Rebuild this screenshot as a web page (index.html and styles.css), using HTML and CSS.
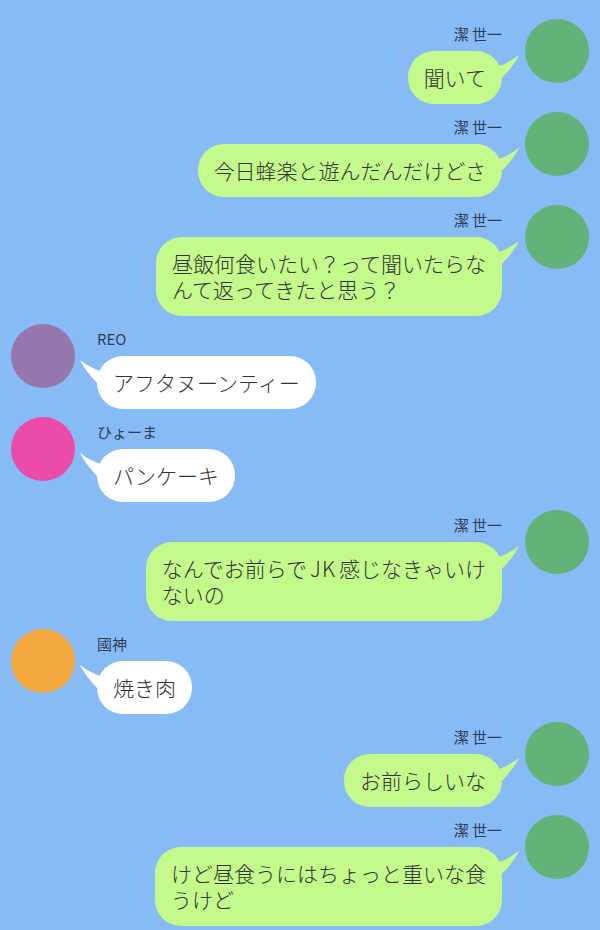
FILE: index.html
```html
<!DOCTYPE html>
<html lang="ja">
<head>
    <meta charset="UTF-8">
    <meta name="viewport" content="width=device-width, initial-scale=1.0">
    <title>トーク</title>
    <link rel="stylesheet" href="styles.css">
</head>
<body>
    <div class="chat">
        <!-- 自分側 -->
        <div class="row me">
            <div class="msg">
                <div class="name">潔 世一</div>
                <div class="bubble">聞いて<svg class="tail" viewBox="0 0 24 30"><path d="M0 16 C8 14 16 10 24 4 C20 12 14 20 4 30 L0 30 Z"/></svg></div>
            </div>
            <div class="avatar green"></div>
        </div>
        <div class="row me">
            <div class="msg">
                <div class="name">潔 世一</div>
                <div class="bubble">今日蜂楽と遊んだんだけどさ<svg class="tail" viewBox="0 0 24 30"><path d="M0 16 C8 14 16 10 24 4 C20 12 14 20 4 30 L0 30 Z"/></svg></div>
            </div>
            <div class="avatar green"></div>
        </div>
        <div class="row me">
            <div class="msg">
                <div class="name">潔 世一</div>
                <div class="bubble">昼飯何食いたい？って聞いたらな<br>んて返ってきたと思う？<svg class="tail" viewBox="0 0 24 30"><path d="M0 16 C8 14 16 10 24 4 C20 12 14 20 4 30 L0 30 Z"/></svg></div>
            </div>
            <div class="avatar green"></div>
        </div>

        <!-- 相手側 -->
        <div class="row other">
            <div class="avatar purple"></div>
            <div class="msg">
                <div class="name">REO</div>
                <div class="bubble">アフタヌーンティー<svg class="tail" viewBox="0 0 24 30"><path d="M0 16 C8 14 16 10 24 4 C20 12 14 20 4 30 L0 30 Z"/></svg></div>
            </div>
        </div>
        <div class="row other">
            <div class="avatar pink"></div>
            <div class="msg">
                <div class="name">ひょーま</div>
                <div class="bubble">パンケーキ<svg class="tail" viewBox="0 0 24 30"><path d="M0 16 C8 14 16 10 24 4 C20 12 14 20 4 30 L0 30 Z"/></svg></div>
            </div>
        </div>

        <div class="row me">
            <div class="msg">
                <div class="name">潔 世一</div>
                <div class="bubble">なんでお前らで<span class="latin">JK</span>感じなきゃいけ<br>ないの<svg class="tail" viewBox="0 0 24 30"><path d="M0 16 C8 14 16 10 24 4 C20 12 14 20 4 30 L0 30 Z"/></svg></div>
            </div>
            <div class="avatar green"></div>
        </div>

        <div class="row other">
            <div class="avatar orange"></div>
            <div class="msg">
                <div class="name">國神</div>
                <div class="bubble">焼き肉<svg class="tail" viewBox="0 0 24 30"><path d="M0 16 C8 14 16 10 24 4 C20 12 14 20 4 30 L0 30 Z"/></svg></div>
            </div>
        </div>

        <div class="row me">
            <div class="msg">
                <div class="name">潔 世一</div>
                <div class="bubble">お前らしいな<svg class="tail" viewBox="0 0 24 30"><path d="M0 16 C8 14 16 10 24 4 C20 12 14 20 4 30 L0 30 Z"/></svg></div>
            </div>
            <div class="avatar green"></div>
        </div>
        <div class="row me">
            <div class="msg">
                <div class="name">潔 世一</div>
                <div class="bubble">けど昼食うにはちょっと重いな食<br>うけど<svg class="tail" viewBox="0 0 24 30"><path d="M0 16 C8 14 16 10 24 4 C20 12 14 20 4 30 L0 30 Z"/></svg></div>
            </div>
            <div class="avatar green"></div>
        </div>
    </div>
</body>
</html>
```

FILE: styles.css
```css
html, body {
    margin: 0;
    padding: 0;
    background-color: #87bbf6;
    overflow: hidden;
}
body {
    font-family: 'Noto Sans CJK JP', 'Noto Sans', sans-serif;
    color: #333;
}
.chat {
    display: flex;
    flex-direction: column;
    gap: 8px;
    padding: 19px 11px 0 11px;
}
.row {
    display: flex;
    align-items: flex-start;
    gap: 22px;
}
.row.me {
    justify-content: flex-end;
    gap: 23px;
}
.avatar {
    flex: 0 0 64px;
    width: 64px;
    height: 64px;
    border-radius: 50%;
}
.avatar.green { background-color: #63b277; }
.avatar.purple { background-color: #9677ad; }
.avatar.pink { background-color: #eb4ca9; }
.avatar.orange { background-color: #f2a83f; }
.msg {
    display: flex;
    flex-direction: column;
    gap: 8px;
    padding-top: 6px;
}
.row.me .msg {
    align-items: flex-end;
}
.row.other .msg {
    align-items: flex-start;
}
.name {
    font-size: 15px;
    line-height: 18px;
    color: #2f3e55;
}
.bubble {
    position: relative;
    padding: 13px 16px 14px 16px;
    font-size: 21px;
    font-weight: 300;
    line-height: 26px;
    white-space: nowrap;
    border-radius: 26px;
    background-color: #c4fa8b;
}
.bubble .latin {
    margin: 0 3px;
    letter-spacing: 1px;
}
.row.other .bubble {
    background-color: #fff;
}
.tail {
    position: absolute;
    top: 0;
    width: 24px;
    height: 30px;
}
.row.me .tail {
    right: -17px;
    fill: #c4fa8b;
}
.row.other .tail {
    left: -17px;
    fill: #fff;
    transform: scaleX(-1);
}
```
